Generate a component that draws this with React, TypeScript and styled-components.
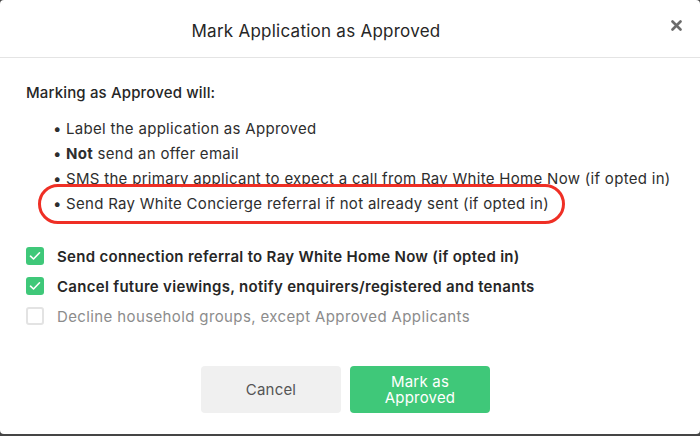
import React from "react";
import styled, { createGlobalStyle } from "styled-components";

const GlobalStyle = createGlobalStyle`
  html, body { margin: 0; padding: 0; background: #454545; }
  body { font-family: Inter, "Noto Sans", "Liberation Sans", sans-serif; -webkit-font-smoothing: antialiased; }
  * { box-sizing: border-box; }
`;

const Modal = styled.div`
  width: 700px;
  height: 434px;
  background: #fff;
  border-radius: 4px;
  display: flex;
  flex-direction: column;
`;

const Header = styled.div`
  height: 58px;
  border-bottom: 1px solid #e4e4e4;
  display: flex;
  align-items: center;
  padding-right: 18px;
`;

const Title = styled.h2`
  flex: 1;
  margin: 4px 0 0 0;
  text-align: center;
  font-size: 17px;
  font-weight: 400;
  letter-spacing: 0.25px;
  color: #262626;
`;

const Close = styled.button`
  width: 50px;
  align-self: flex-start;
  margin-top: 20px;
  padding: 0;
  border: 0;
  background: none;
  display: flex;
  justify-content: flex-end;
  cursor: pointer;
`;

const Body = styled.div`
  padding: 25px 26px 0 26px;
  display: flex;
  flex-direction: column;
`;

const Lead = styled.p`
  margin: 0;
  font-size: 15px;
  line-height: 20px;
  font-weight: 500;
  letter-spacing: 0.15px;
  color: #262626;
`;

const List = styled.ul`
  list-style: none;
  margin: 13px 0 0 0;
  padding: 0 0 0 40px;
`;

const Item = styled.li`
  position: relative;
  font-size: 15px;
  line-height: 25px;
  letter-spacing: 0.3px;
  color: #2e2e2e;
  &::before {
    content: "•";
    position: absolute;
    left: -13px;
    top: 0;
  }
  b { font-weight: 700; }
`;

const Circle = styled.span`
  position: absolute;
  left: -28px;
  top: -7px;
  width: 527px;
  height: 40px;
  border: 3px solid #ef2f25;
  border-radius: 20px;
  pointer-events: none;
`;

const Checks = styled.div`
  margin-top: 25px;
  display: flex;
  flex-direction: column;
`;

const CheckRow = styled.label<{ $disabled?: boolean }>`
  height: 30px;
  display: flex;
  align-items: center;
  gap: 13px;
  font-size: 15px;
  letter-spacing: ${(p) => (p.$disabled ? "0.38px" : "0.3px")};
  font-weight: ${(p) => (p.$disabled ? 400 : 600)};
  color: ${(p) => (p.$disabled ? "#8c8c8c" : "#262626")};
`;

const Box = styled.span<{ $checked?: boolean }>`
  width: 18px;
  height: 18px;
  border-radius: 3px;
  flex: none;
  display: flex;
  align-items: center;
  justify-content: center;
  background: ${(p) => (p.$checked ? "#3fc879" : "#fff")};
  border: ${(p) => (p.$checked ? "none" : "2px solid #e3e3e3")};
`;

const Actions = styled.div`
  margin-top: 35px;
  display: flex;
  justify-content: center;
  gap: 9px;
  padding-right: 9px;
`;

const Button = styled.button<{ $primary?: boolean }>`
  width: 140px;
  height: 47px;
  border: 0;
  border-radius: 4px;
  font-family: inherit;
  font-size: 15px;
  line-height: 16px;
  font-weight: 400;
  letter-spacing: 0.2px;
  background: ${(p) => (p.$primary ? "#3fc879" : "#f0f0f0")};
  color: ${(p) => (p.$primary ? "#fff" : "#555")};
  cursor: pointer;
  display: flex;
  align-items: center;
  justify-content: center;
`;

const Label = styled.span`
  display: block;
  max-width: 90px;
  text-align: center;
`;

const Check = () => (
  <svg width="12" height="10" viewBox="0 0 12 10">
    <path d="M1.5 5.2 L4.5 8 L10.5 1.8" fill="none" stroke="#fff" strokeWidth="1.6" strokeLinecap="round" strokeLinejoin="round" />
  </svg>
);

const CloseIcon = () => (
  <svg width="11" height="11" viewBox="0 0 11 11">
    <path d="M1.5 1.5 L9.5 9.5 M9.5 1.5 L1.5 9.5" stroke="#6b6b6b" strokeWidth="2.6" strokeLinecap="round" />
  </svg>
);

export default function App() {
  return (
    <>
      <GlobalStyle />
      <Modal>
        <Header>
          <Title>Mark Application as Approved</Title>
          <Close aria-label="Close"><CloseIcon /></Close>
        </Header>
        <Body>
          <Lead>Marking as Approved will:</Lead>
          <List>
            <Item>Label the application as Approved</Item>
            <Item><b>Not</b> send an offer email</Item>
            <Item>SMS the primary applicant to expect a call from Ray White Home Now (if opted in)</Item>
            <Item>Send Ray White Concierge referral if not already sent (if opted in)<Circle /></Item>
          </List>
          <Checks>
            <CheckRow><Box $checked><Check /></Box>Send connection referral to Ray White Home Now (if opted in)</CheckRow>
            <CheckRow><Box $checked><Check /></Box>Cancel future viewings, notify enquirers/registered and tenants</CheckRow>
            <CheckRow $disabled><Box />Decline household groups, except Approved Applicants</CheckRow>
          </Checks>
          <Actions>
            <Button><Label>Cancel</Label></Button>
            <Button $primary><Label>Mark as Approved</Label></Button>
          </Actions>
        </Body>
      </Modal>
    </>
  );
}
